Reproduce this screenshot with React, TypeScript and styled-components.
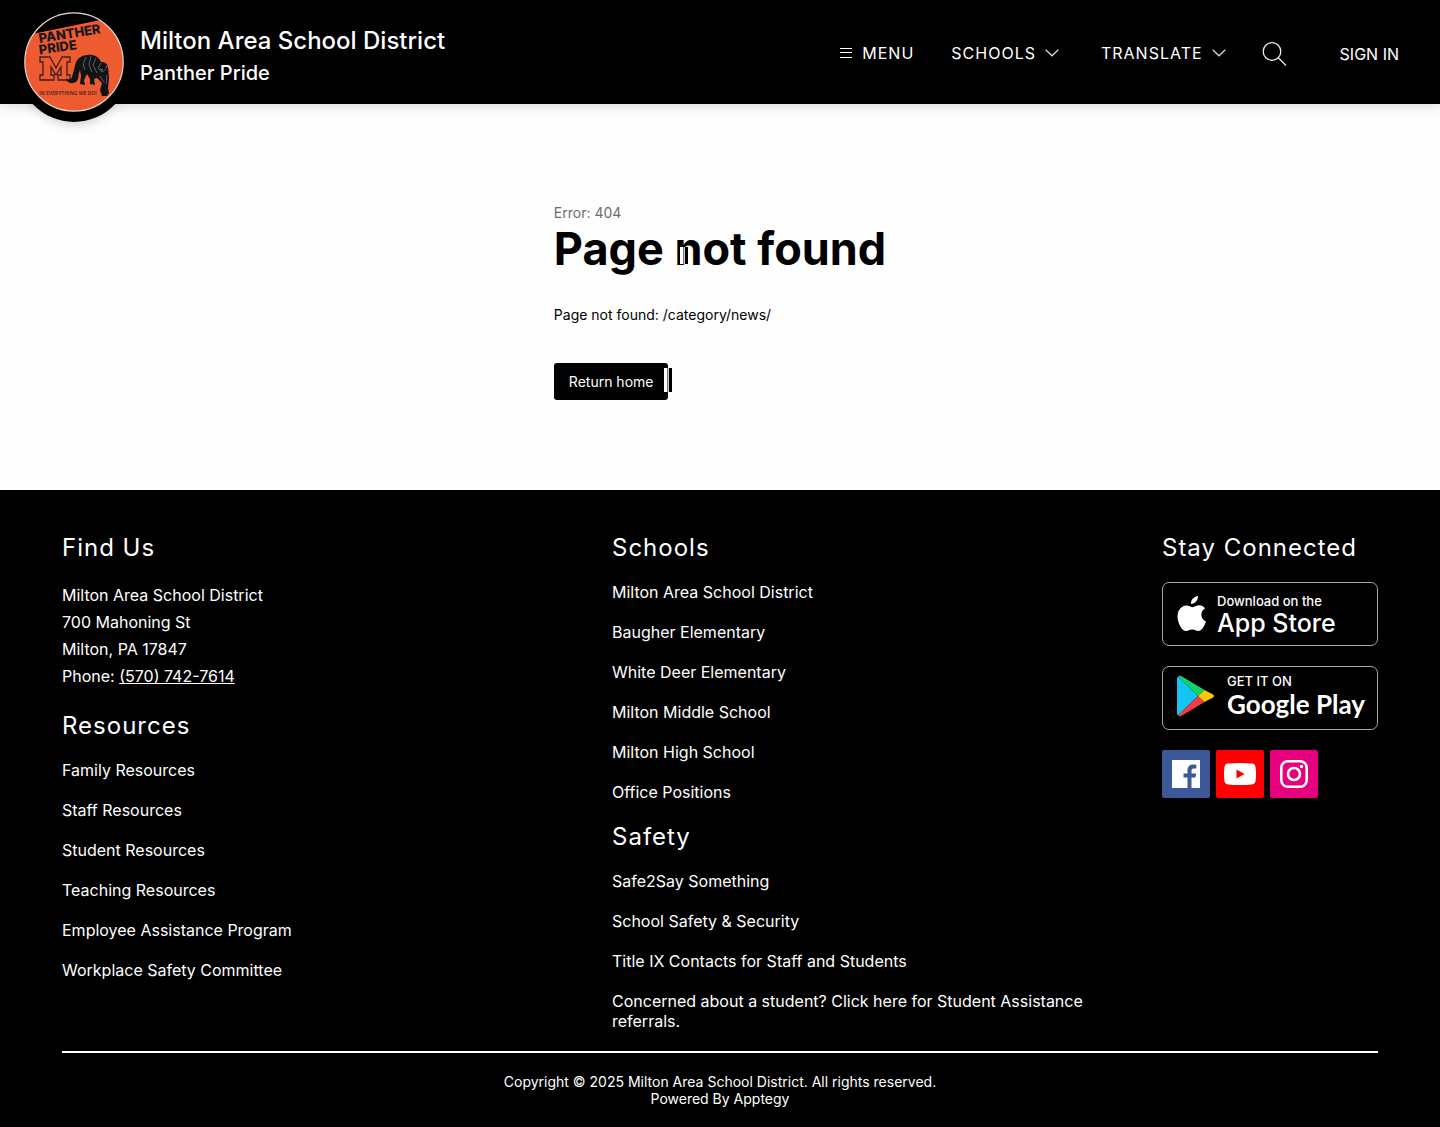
import React from "react";
import styled, { createGlobalStyle } from "styled-components";

const GlobalStyle = createGlobalStyle`
  *, *::before, *::after { box-sizing: border-box; }
  body {
    margin: 0;
    background: #fefefe;
    color: #000;
    font-family: Inter, "Liberation Sans", sans-serif;
    font-size: 16px;
  }
  h1, h2, p, ul { margin: 0; padding: 0; }
  ul { list-style: none; }
  a { color: inherit; text-decoration: none; }
  button { font: inherit; color: inherit; background: none; border: 0; padding: 0; cursor: pointer; }
  svg { display: block; }
`;

const Header = styled.header`
  display: flex;
  align-items: flex-start;
  justify-content: space-between;
  height: 104px;
  padding: 0 41px 0 16px;
  background: #000;
  color: #fff;
  box-shadow: 0 2px 12px rgba(0, 0, 0, 0.15);
`;

const Brand = styled.a`
  display: flex;
  gap: 8px;
`;

const LogoDisc = styled.span`
  display: block;
  height: 122px;
  padding: 4px 0 2px;
  border-radius: 50%;
  background: #000;
  box-shadow: 0 6px 12px -4px rgba(0, 0, 0, 0.2);
`;

const BrandText = styled.span`
  display: flex;
  flex-direction: column;
  padding-top: 24px;
`;

const DistrictName = styled.span`
  font-size: 24px;
  line-height: 34px;
  font-weight: 500;
`;

const Motto = styled.span`
  font-size: 20px;
  line-height: 30px;
  font-weight: 500;
`;

const Nav = styled.nav`
  display: flex;
  align-items: center;
  height: 108px;
`;

const NavButton = styled.button<{ $gap: number; $after: number }>`
  display: flex;
  align-items: center;
  gap: ${(p) => p.$gap}px;
  margin-right: ${(p) => p.$after}px;
  padding-bottom: 2px;
  font-size: 16px;
  line-height: 24px;
  letter-spacing: 1px;
`;

const SearchButton = styled.button`
  margin-right: 53px;
`;

const SignIn = styled.a`
  font-size: 16px;
  line-height: 24px;
`;

const Main = styled.main`
  display: flex;
  justify-content: center;
  padding: 100px 24px 90px;
`;

const Notice = styled.section`
  display: flex;
  flex-direction: column;
  align-items: flex-start;
`;

const ErrorCode = styled.p`
  font-size: 14px;
  line-height: 18px;
  color: #6c6c6c;
`;

const Title = styled.h1`
  position: relative;
  font-size: 45px;
  line-height: 54px;
  font-weight: 700;
`;

const Detail = styled.p`
  padding: 30px 0 39px;
  font-size: 14px;
  line-height: 18px;
`;

const HomeLink = styled.a`
  position: relative;
  padding: 10px 15px 9px;
  border-radius: 3px;
  background: #000;
  color: #fff;
  font-size: 14px;
  line-height: 18px;
`;

const Caret = styled.span<{ $x: number; $y: number; $h: number }>`
  position: absolute;
  left: ${(p) => p.$x}px;
  top: ${(p) => p.$y}px;
  width: 8px;
  height: ${(p) => p.$h}px;
  background: linear-gradient(90deg, #fff 0 3px, #777 3px 4px, #ccc 4px 5px, #000 5px 8px);
`;

const Footer = styled.footer`
  padding: 40px 62px 20px;
  background: #000;
  color: #fff;
`;

const Columns = styled.div`
  display: grid;
  grid-template-columns: 1fr 1fr 216px;
  column-gap: 50px;
  padding-bottom: 20px;
  border-bottom: 2px solid #fff;
`;

const Heading = styled.h2`
  font-size: 24px;
  line-height: 36px;
  font-weight: 400;
  letter-spacing: 1px;
`;

const Address = styled.address`
  padding: 16px 0 18px;
  font-style: normal;
  line-height: 27px;
`;

const PhoneLink = styled.a`
  text-decoration: underline;
`;

const Links = styled.ul<{ $last?: boolean }>`
  display: flex;
  flex-direction: column;
  gap: 20px;
  padding: 16px 0 ${(p) => (p.$last ? 0 : 17)}px;
  line-height: 20px;
`;

const Connect = styled.div`
  display: flex;
  flex-direction: column;
  gap: 20px;
`;

const ConnectHeading = styled(Heading)`
  margin-bottom: -4px;
`;

const StoreBadge = styled.a<{ $gap: number }>`
  display: flex;
  align-items: flex-start;
  gap: ${(p) => p.$gap}px;
  height: 64px;
  padding-left: 14px;
  border: 1px solid #a6a6a6;
  border-radius: 7px;
`;

const BadgeIcon = styled.span<{ $top: number }>`
  padding-top: ${(p) => p.$top}px;
`;

const BadgeText = styled.span<{ $top: number }>`
  display: flex;
  flex-direction: column;
  padding-top: ${(p) => p.$top}px;
`;

const BadgeSmall = styled.span`
  font-size: 13px;
  line-height: 16px;
  font-weight: 500;
`;

const BadgeLarge = styled.span<{ $google?: boolean }>`
  font-family: ${(p) => (p.$google ? 'Lato, "Open Sans"' : "Inter")}, sans-serif;
  font-size: ${(p) => (p.$google ? 26 : 25)}px;
  line-height: ${(p) => (p.$google ? 30 : 28)}px;
  font-weight: ${(p) => (p.$google ? 700 : 500)};
`;

const Socials = styled.div`
  display: flex;
  gap: 6px;
`;

const Social = styled.a<{ $color: string }>`
  display: grid;
  place-items: center;
  width: 48px;
  height: 48px;
  border-radius: 2px;
  background: ${(p) => p.$color};
`;

const Legal = styled.div`
  padding-top: 20px;
  text-align: center;
  font-size: 14px;
  line-height: 17px;
`;

const Chevron = () => (
  <svg width="14" height="8" viewBox="0 0 14 8" fill="none" stroke="#ddd" strokeWidth="1.2" aria-hidden="true">
    <path d="M.7.8 7 6.8 13.3.8" />
  </svg>
);

const Logo = () => (
  <svg width="116" height="116" viewBox="16 4 116 116" role="img" aria-label="Panther Pride logo">
    <defs>
      <clipPath id="disc"><circle cx="74" cy="62" r="49" /></clipPath>
    </defs>
    <circle cx="74" cy="62" r="49" fill="#ee5b30" />
    <path d="M20 36.500 120 16V8H20z" fill="#000" clipPath="url(#disc)" />
    <g fill="#1b1718" fontFamily="Inter, sans-serif" fontWeight="800" fontSize="13">
      <text x="39.500" y="43" transform="rotate(-9 39.500 43)">PANTHER</text>
      <text x="39.500" y="54.500" transform="rotate(-8 39.500 54.500)">PRIDE</text>
    </g>
    <path d="M40 57h10l6 11 6-11h8v5h-3v13h3v5H58v-5h3v-8l-5 8-5-8v8h3v5H40v-5h3V62h-3z" fill="none" stroke="#3a2020" strokeWidth="1.3" />
    <path d="M66 78c0 5 7 7 11 3 2-3 1-7 3-11l1 6-1 8 5 1-1-5 3-6 3 5 0 5 5 1-1-6 3-1 5 5-2 7 2 6h5l2-3-1-5 1-10-1-11c-1-4-4-5-7-5-2-5-7-8-13-7-7 0-12 4-13 11l-3 11c-1 3-5 4-6 0z" fill="#121315" />
    <path d="M86 57l-3 7 2 6M91 56l-2 9 3 7M96 58l-3 7 4 8M101 63l-3 5 4 4 4-3M100 76l4 6M107 75l-1 9" fill="none" stroke="#53616b" strokeWidth="1" />
    <path d="M100 69l3 1M106 68l1-2" stroke="#a7afb5" strokeWidth=".7" />
    <text x="39" y="94.500" fontSize="5" fontWeight="700" fill="#5a2a20" fontFamily='"Open Sans", sans-serif'>IN EVERYTHING WE DO!</text>
    <circle cx="74" cy="62" r="49.200" fill="none" stroke="#ead8d0" strokeWidth="1.200" />
  </svg>
);

const schools = [
  "Milton Area School District", "Baugher Elementary", "White Deer Elementary",
  "Milton Middle School", "Milton High School", "Office Positions",
];
const resources = [
  "Family Resources", "Staff Resources", "Student Resources",
  "Teaching Resources", "Employee Assistance Program", "Workplace Safety Committee",
];
const safety = [
  "Safe2Say Something", "School Safety & Security", "Title IX Contacts for Staff and Students",
  "Concerned about a student? Click here for Student Assistance referrals.",
];

const LinkList = ({ items, last }: { items: string[]; last?: boolean }) => (
  <Links $last={last}>
    {items.map((item) => <li key={item}><a href="#">{item}</a></li>)}
  </Links>
);

export default function App() {
  return (
    <>
      <GlobalStyle />
      <Header>
        <Brand href="#">
          <LogoDisc><Logo /></LogoDisc>
          <BrandText>
            <DistrictName>Milton Area School District</DistrictName>
            <Motto>Panther Pride</Motto>
          </BrandText>
        </Brand>
        <Nav aria-label="Main">
          <NavButton $gap={10} $after={37}>
            <svg width="12" height="10" viewBox="0 0 12 10" stroke="#fff" aria-hidden="true">
              <path d="M0 .5h12M0 4.500h12M0 9.500h12" />
            </svg>
            MENU
          </NavButton>
          <NavButton $gap={9} $after={42}>SCHOOLS <Chevron /></NavButton>
          <NavButton $gap={9} $after={36}>TRANSLATE <Chevron /></NavButton>
          <SearchButton aria-label="Search">
            <svg width="25" height="24" viewBox="0 0 25 24" fill="none" stroke="#eee" strokeWidth="1.300" aria-hidden="true">
              <circle cx="10" cy="9.500" r="8.800" /><path d="m16.500 16 7.500 7.500" />
            </svg>
          </SearchButton>
          <SignIn href="#">SIGN IN</SignIn>
        </Nav>
      </Header>

      <Main>
        <Notice>
          <ErrorCode>Error: 404</ErrorCode>
          <Title>Page not found<Caret $x={126} $y={25} $h={17} /></Title>
          <Detail>Page not found: /category/news/</Detail>
          <HomeLink href="#">Return home<Caret $x={110} $y={5} $h={24} /></HomeLink>
        </Notice>
      </Main>

      <Footer>
        <Columns>
          <div>
            <Heading>Find Us</Heading>
            <Address>
              Milton Area School District<br />
              700 Mahoning St<br />
              Milton, PA 17847<br />
              Phone: <PhoneLink href="tel:5707427614">(570) 742-7614</PhoneLink>
            </Address>
            <Heading>Resources</Heading>
            <LinkList items={resources} last />
          </div>
          <div>
            <Heading>Schools</Heading>
            <LinkList items={schools} />
            <Heading>Safety</Heading>
            <LinkList items={safety} last />
          </div>
          <Connect>
            <ConnectHeading>Stay Connected</ConnectHeading>
            <StoreBadge href="#" $gap={10}>
              <BadgeIcon $top={13}>
                <svg width="30" height="36" viewBox="0 0 30 36" fill="#fff" aria-hidden="true">
                  <path d="M21 0c.3 4-3 8-7 8-.5-4 3-7.500 7-8zM28 12.300c-5.500 3.500-4.500 11 1 13.200C27.500 29.500 25 35 21.500 35c-2.500 0-3.200-1.500-6.300-1.500S11.500 35 9 35C5 35 .5 27 .5 20.500.5 13.500 5 9.500 9.500 9.500c2.500 0 4.500 1.700 6 1.700s3.800-1.900 6.800-1.900c2.200 0 4.300 1.100 5.700 3z" />
                </svg>
              </BadgeIcon>
              <BadgeText $top={10}>
                <BadgeSmall>Download on the</BadgeSmall>
                <BadgeLarge>App Store</BadgeLarge>
              </BadgeText>
            </StoreBadge>
            <StoreBadge href="#" $gap={12}>
              <BadgeIcon $top={8}>
                <svg width="38" height="42" viewBox="0 0 38 42" aria-hidden="true">
                  <path d="M1 1.500Q0 2.500 0 4v34q0 1.500 1 2.500L21 21z" fill="#12c5f2" />
                  <path d="M1 1.500Q2.500 0 5 1.500L27.500 15 21 21z" fill="#12d36b" />
                  <path d="M1 40.500Q2.500 42 5 40.500L27.500 27 21 21z" fill="#f33b4b" />
                  <path d="M27.500 15 36 19.500q2 1.500 0 3L27.500 27 21 21z" fill="#fdc70a" />
                </svg>
              </BadgeIcon>
              <BadgeText $top={6}>
                <BadgeSmall>GET IT ON</BadgeSmall>
                <BadgeLarge $google>Google Play</BadgeLarge>
              </BadgeText>
            </StoreBadge>
            <Socials>
              <Social href="#" $color="#3b5998" aria-label="Facebook">
                <svg width="28" height="28" viewBox="0 0 28 28" aria-hidden="true">
                  <path d="M0 0h28v28h-8.500V17.500h4l.6-4h-4.600v-3q0-2 2.200-2h2.600V4.700q-8.800-1.500-8.800 5.300v3.500h-4v4h4V28H0z" fill="#fff" />
                </svg>
              </Social>
              <Social href="#" $color="#ff0000" aria-label="YouTube">
                <svg width="32" height="22" viewBox="0 0 32 22" aria-hidden="true">
                  <path d="M4 .6q12-1.200 24 0 3 .4 3.500 3.400 1 7 0 14-.5 3-3.500 3.400-12 1.200-24 0Q1 21 .5 18q-1-7 0-14Q1 1 4 .6z" fill="#fff" />
                  <path d="m12.500 6.500 8 4.500-8 4.500z" fill="#f00" />
                </svg>
              </Social>
              <Social href="#" $color="#e6007e" aria-label="Instagram">
                <svg width="28" height="28" viewBox="0 0 28 28" fill="none" stroke="#fff" strokeWidth="2.600" aria-hidden="true">
                  <rect x="1.300" y="1.300" width="25.400" height="25.400" rx="6.500" />
                  <circle cx="14" cy="14" r="6" /><circle cx="21.500" cy="6.500" r="1.700" fill="#fff" stroke="none" />
                </svg>
              </Social>
            </Socials>
          </Connect>
        </Columns>
        <Legal>
          <p>Copyright © 2025 Milton Area School District. All rights reserved.</p>
          <p>Powered By <a href="#">Apptegy</a></p>
        </Legal>
      </Footer>
    </>
  );
}
